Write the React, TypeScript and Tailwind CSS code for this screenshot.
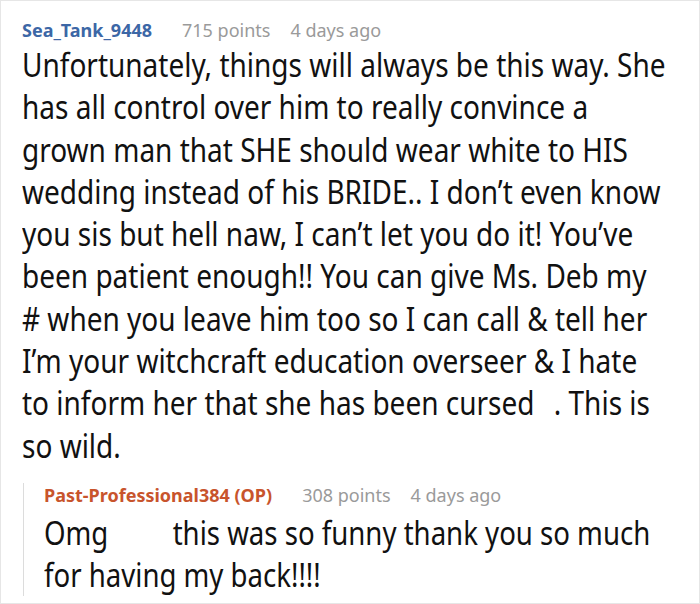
import React from "react";

export default function App() {
  return (
    <div
      className="w-[700px] h-[604px] bg-white border border-[#e6e6e6] pl-[21px] pr-[29px] pt-[17px] box-border overflow-hidden"
      style={{ fontFamily: '"Noto Sans", "Open Sans", sans-serif' }}
    >
      <div className="flex items-baseline text-[18px] leading-[24px] whitespace-nowrap">
        <span className="font-bold text-[#3c67a6]">Sea_Tank_9448</span>
        <span className="ml-[30px] text-[#9a9a9a]">715 points</span>
        <span className="ml-[20px] text-[#9a9a9a]">4 days ago</span>
      </div>
      <p className="mt-[2px] w-[740px] origin-left scale-x-[0.875] text-[32px] leading-[42.3px] text-[#111111]">
        Unfortunately, things will always be this way. She has all control over him to really
        convince a grown man that SHE should wear white to HIS wedding instead of his BRIDE.. I
        don’t even know you sis but hell naw, I can’t let you do it! You’ve been patient enough!!
        You can give Ms. Deb my # when you leave him too so I can call &amp; tell her I’m your
        witchcraft education overseer &amp; I hate to inform her that she has been cursed
        <span className="inline-block w-[22px]"></span>. This is so wild.
      </p>
      <div className="mt-[26px] ml-[1px] border-l border-[#dcdcdc] pl-[20px]">
        <div className="flex items-baseline text-[18px] leading-[24px] -mt-[10px] whitespace-nowrap">
          <span className="font-bold text-[#c8542c]">Past-Professional384 (OP)</span>
          <span className="ml-[30px] text-[#9a9a9a]">308 points</span>
          <span className="ml-[20px] text-[#9a9a9a]">4 days ago</span>
        </div>
        <p className="mt-[5px] -mb-[12px] w-[727px] origin-left scale-x-[0.862] text-[32px] leading-[42px] text-[#111111]">
          Omg <span className="inline-block w-[58px]"></span> this was so funny thank you so much
          for having my back!!!!
        </p>
      </div>
    </div>
  );
}
